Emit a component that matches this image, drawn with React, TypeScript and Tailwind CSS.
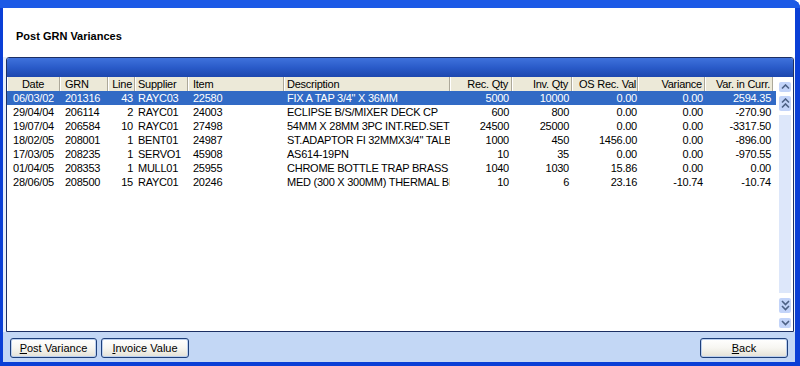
type Row = {
  date: string;
  grn: string;
  line: string;
  supplier: string;
  item: string;
  desc: string;
  rec: string;
  inv: string;
  os: string;
  variance: string;
  curr: string;
};

const rows: Row[] = [
  { date: "06/03/02", grn: "201316", line: "43", supplier: "RAYC03", item: "22580", desc: 'FIX A TAP 3/4" X 36MM', rec: "5000", inv: "10000", os: "0.00", variance: "0.00", curr: "2594.35" },
  { date: "29/04/04", grn: "206114", line: "2", supplier: "RAYC01", item: "24003", desc: "ECLIPSE B/S/MIXER DECK CP", rec: "600", inv: "800", os: "0.00", variance: "0.00", curr: "-270.90" },
  { date: "19/07/04", grn: "206584", line: "10", supplier: "RAYC01", item: "27498", desc: "54MM X 28MM 3PC INT.RED.SET", rec: "24500", inv: "25000", os: "0.00", variance: "0.00", curr: "-3317.50" },
  { date: "18/02/05", grn: "208001", line: "1", supplier: "BENT01", item: "24987", desc: 'ST.ADAPTOR FI 32MMX3/4" TALBOT', rec: "1000", inv: "450", os: "1456.00", variance: "0.00", curr: "-896.00" },
  { date: "17/03/05", grn: "208235", line: "1", supplier: "SERVO1", item: "45908", desc: "AS614-19PN", rec: "10", inv: "35", os: "0.00", variance: "0.00", curr: "-970.55" },
  { date: "01/04/05", grn: "208353", line: "1", supplier: "MULL01", item: "25955", desc: "CHROME BOTTLE TRAP BRASS 40MM", rec: "1040", inv: "1030", os: "15.86", variance: "0.00", curr: "0.00" },
  { date: "28/06/05", grn: "208500", line: "15", supplier: "RAYC01", item: "20246", desc: "MED (300 X 300MM) THERMAL BLANKET", rec: "10", inv: "6", os: "23.16", variance: "-10.74", curr: "-10.74" },
];

const cols: { key: keyof Row; label: string; cls: string }[] = [
  { key: "date", label: "Date", cls: "w-[53px] text-center" },
  { key: "grn", label: "GRN", cls: "w-[48px] pl-[5px]" },
  { key: "line", label: "Line", cls: "w-[27px] text-right pr-[2px]" },
  { key: "supplier", label: "Supplier", cls: "w-[53px] pl-[3px]" },
  { key: "item", label: "Item", cls: "w-[96px] pl-[5px]" },
  { key: "desc", label: "Description", cls: "w-[166px] pl-[3px]" },
  { key: "rec", label: "Rec. Qty", cls: "w-[62px] text-right pr-[3px]" },
  { key: "inv", label: "Inv. Qty", cls: "w-[60px] text-right pr-[3px]" },
  { key: "os", label: "OS Rec. Val", cls: "w-[66px] text-right pr-[1px]" },
  { key: "variance", label: "Variance", cls: "w-[67px] text-right pr-[2px]" },
  { key: "curr", label: "Var. in Curr.", cls: "w-[68px] text-right pr-[2px]" },
];

function Chevrons({ count, down }: { count: number; down?: boolean }) {
  const h = count === 1 ? 10 : 15;
  return (
    <div className="flex w-[12px] items-center justify-center rounded-[2px] bg-[#c3d4f9]" style={{ height: h }}>
      <svg width="9" height={count === 1 ? 6 : 11} viewBox={count === 1 ? "0 0 9 6" : "0 0 9 11"}>
        {Array.from({ length: count }).map((_, i) => {
          const y = i * 5;
          const pts = down ? `1,${y + 1} 4.5,${y + 4.5} 8,${y + 1}` : `1,${y + 4.5} 4.5,${y + 1} 8,${y + 4.5}`;
          return <polyline key={i} points={pts} fill="none" stroke="#4d6185" strokeWidth="1.6" />;
        })}
      </svg>
    </div>
  );
}

function XpButton({ label, k, w }: { label: string; k: string; w: string }) {
  const rest = label.slice(1);
  return (
    <button
      type="button"
      className={`${w} h-[20px] rounded-[3px] border border-[#1e3f7a] bg-gradient-to-b from-white via-[#f7f6f1] to-[#e3e1d6] text-[11px] leading-[18px] text-black shadow-[inset_0_0_0_1px_#bcd0ef]`}
    >
      <span className="underline underline-offset-1">{k}</span>
      {rest}
    </button>
  );
}

export default function App() {
  return (
    <div className="h-[366px] w-[800px] overflow-hidden bg-white font-['Liberation_Sans',Arial,sans-serif] text-[11px] text-black">
      <div className="flex h-full flex-col overflow-hidden rounded-tr-[8px] bg-[#0a3fd6]">
        <div className="h-[8px] shrink-0 bg-[#1c5ae6]" />
        <div className="flex min-h-0 flex-1 flex-col pb-[4px] pl-[3px] pr-[5px]">
          <div className="flex min-h-0 flex-1 flex-col bg-white">
            <div className="h-[49px] shrink-0 pl-[13px] pt-[22px] text-[11px] font-bold leading-[13px]">Post GRN Variances</div>

            <div className="flex min-h-0 flex-1 flex-col bg-[#e6eefb] pl-[3px] pr-[1px]">
              <div className="flex min-h-0 flex-1 flex-col overflow-hidden rounded-t-[3px] border border-[#1c2f63] bg-white tracking-[-0.25px]">
                <div className="h-[19px] shrink-0 bg-gradient-to-b from-[#3f72dc] via-[#2a5bc9] to-[#1d47ae]" />
                <div className="flex min-h-0 flex-1">
                  <div className="flex flex-col">
                    <div className="flex h-[14px] leading-[14px]">
                      {cols.map((c) => (
                        <div
                          key={c.key}
                          className={`${c.cls} overflow-hidden whitespace-nowrap border-r border-[#aca899] bg-[#ece9d8] shadow-[inset_1px_0_0_#ffffff]`}
                        >
                          {c.label}
                        </div>
                      ))}
                      <div className="w-[3px]" />
                    </div>
                    {rows.map((r, i) => (
                      <div
                        key={r.grn}
                        className={`flex h-[14px] leading-[14px] ${i === 0 ? "bg-[#316ac5] text-white" : ""}`}
                      >
                        {cols.map((c) => (
                          <div key={c.key} className={`${c.cls} overflow-hidden whitespace-nowrap`}>
                            {r[c.key]}
                          </div>
                        ))}
                        <div className="w-[3px]" />
                      </div>
                    ))}
                  </div>
                  <div className="flex w-[17px] flex-col pb-[3px] pl-[3px] pt-[5px]">
                    <Chevrons count={1} />
                    <div className="mt-[4px]">
                      <Chevrons count={2} />
                    </div>
                    <div className="mb-[5px] mt-[4px] w-[12px] flex-1 bg-[#dde7fa]" />
                    <Chevrons count={2} down />
                    <div className="mt-[5px]">
                      <Chevrons count={1} down />
                    </div>
                  </div>
                </div>
              </div>
            </div>

            <div className="flex h-[30px] shrink-0 items-start justify-between bg-[#c3d7f5] px-[7px] pt-[6px]">
              <div className="flex gap-[4px]">
                <XpButton label="Post Variance" k="P" w="w-[87px]" />
                <XpButton label="Invoice Value" k="I" w="w-[88px]" />
              </div>
              <XpButton label="Back" k="B" w="w-[88px]" />
            </div>
          </div>
        </div>
      </div>
    </div>
  );
}
